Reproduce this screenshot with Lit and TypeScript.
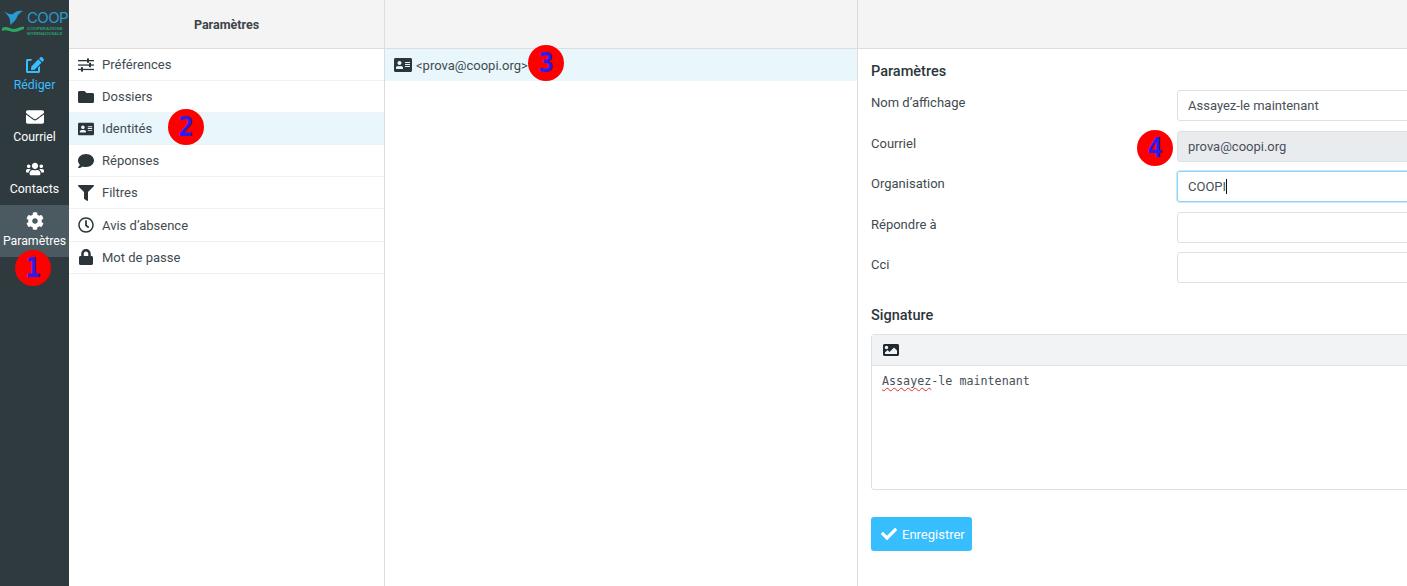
import { LitElement, css, html, svg } from "lit";
import { customElement } from "lit/decorators.js";

const icon = (vb: string, d: string) => html`<svg viewBox=${vb} fill="currentColor" aria-hidden="true"><path d=${d}></path></svg>`;

const ICONS = {
  edit: icon("0 0 576 512", "M402.6 83.2l90.2 90.2c3.8 3.8 3.8 10 0 13.8L274.4 405.6l-92.8 10.3c-12.4 1.4-22.9-9.1-21.5-21.5l10.3-92.8L388.8 83.2c3.8-3.8 10-3.8 13.8 0zm162-22.9l-48.8-48.8c-15.2-15.2-39.9-15.2-55.2 0l-35.4 35.4c-3.8 3.8-3.8 10 0 13.8l90.2 90.2c3.8 3.8 10 3.8 13.8 0l35.4-35.4c15.2-15.3 15.2-40 0-55.2zM384 346.2V448H64V128h73.1c3.2 0 6.2-1.3 8.5-3.5l40-40c7.6-7.6 2.2-20.5-8.5-20.5H48C21.5 64 0 85.5 0 112v352c0 26.5 21.5 48 48 48h352c26.5 0 48-21.5 48-48V306.2c0-10.7-12.9-16-20.5-8.5l-40 40c-2.2 2.3-3.5 5.3-3.5 8.5z"),
  envelope: icon("0 0 512 512", "M502.3 190.8c3.9-3.1 9.7-.2 9.7 4.7V400c0 26.5-21.5 48-48 48H48c-26.5 0-48-21.5-48-48V195.6c0-5 5.7-7.8 9.7-4.7 22.4 17.4 52.1 39.5 154.1 113.6 21.1 15.4 56.7 47.8 92.2 47.6 35.7.3 72-32.8 92.3-47.6 102-74.1 131.6-96.3 154-113.7zM256 320c23.2.4 56.6-29.2 73.4-41.4 132.7-96.3 142.8-104.7 173.4-128.7 5.8-4.5 9.2-11.5 9.2-18.9v-19c0-26.5-21.5-48-48-48H48C21.5 64 0 85.5 0 112v19c0 7.4 3.4 14.3 9.2 18.9 30.6 23.9 40.7 32.4 173.4 128.7 16.8 12.2 50.2 41.8 73.4 41.4z"),
  users: icon("0 0 640 512", "M96 224c35.3 0 64-28.7 64-64s-28.7-64-64-64-64 28.7-64 64 28.7 64 64 64zm448 0c35.3 0 64-28.7 64-64s-28.7-64-64-64-64 28.7-64 64 28.7 64 64 64zm32 32h-64c-17.6 0-33.5 7.1-45.1 18.6 40.3 22.1 68.9 62 75.1 109.4h66c17.7 0 32-14.3 32-32v-32c0-35.3-28.7-64-64-64zm-256 0c61.9 0 112-50.1 112-112S381.9 32 320 32 208 82.1 208 144s50.1 112 112 112zm76.8 32h-8.3c-20.8 10-43.9 16-68.5 16s-47.6-6-68.5-16h-8.3C179.6 288 128 339.6 128 403.2V432c0 26.5 21.5 48 48 48h288c26.5 0 48-21.5 48-48v-28.8c0-63.6-51.6-115.2-115.2-115.2zm-223.7-13.4C161.5 263.1 145.6 256 128 256H64c-35.3 0-64 28.7-64 64v32c0 17.7 14.3 32 32 32h65.9c6.3-47.4 34.9-87.3 75.2-109.4z"),
  cog: icon("0 0 512 512", "M487.4 315.7l-42.6-24.6c4.3-23.2 4.3-47 0-70.2l42.6-24.6c4.9-2.8 7.1-8.6 5.5-14-11.1-35.6-30-67.8-54.7-94.6-3.8-4.1-10-5.1-14.8-2.3L380.8 110c-17.9-15.4-38.5-27.3-60.8-35.1V25.8c0-5.6-3.9-10.5-9.4-11.7-36.7-8.2-74.3-7.8-109.2 0-5.5 1.2-9.4 6.1-9.4 11.7V75c-22.2 7.9-42.8 19.8-60.8 35.1L88.7 85.5c-4.9-2.8-11-1.9-14.8 2.3-24.7 26.7-43.6 58.9-54.7 94.6-1.7 5.4.6 11.2 5.5 14L67.3 221c-4.3 23.2-4.3 47 0 70.2l-42.6 24.6c-4.9 2.8-7.1 8.6-5.5 14 11.1 35.6 30 67.8 54.7 94.6 3.8 4.1 10 5.1 14.8 2.3l42.6-24.6c17.9 15.4 38.5 27.3 60.8 35.1v49.2c0 5.6 3.9 10.5 9.4 11.7 36.7 8.2 74.3 7.8 109.2 0 5.5-1.2 9.4-6.1 9.4-11.7v-49.2c22.2-7.9 42.8-19.8 60.8-35.1l42.6 24.6c4.9 2.8 11 1.9 14.8-2.3 24.7-26.7 43.6-58.9 54.7-94.6 1.5-5.5-.7-11.3-5.6-14.1zM256 336c-44.1 0-80-35.9-80-80s35.9-80 80-80 80 35.9 80 80-35.9 80-80 80z"),
  sliders: html`<svg viewBox="0 0 16 14" fill="currentColor" aria-hidden="true"><rect x="0" y="2" width="16" height="1.3"></rect><rect x="9" y="0.4" width="2" height="4.4"></rect><rect x="0" y="6.4" width="16" height="1.3"></rect><rect x="11" y="4.8" width="2" height="4.4"></rect><rect x="0" y="10.8" width="16" height="1.3"></rect><rect x="3" y="9.2" width="2" height="4.4"></rect></svg>`,
  folder: icon("0 0 512 512", "M464 128H272l-64-64H48C21.49 64 0 85.49 0 112v288c0 26.51 21.49 48 48 48h416c26.51 0 48-21.49 48-48V176c0-26.51-21.49-48-48-48z"),
  card: icon("0 0 576 512", "M528 32H48C21.5 32 0 53.5 0 80v352c0 26.5 21.5 48 48 48h480c26.5 0 48-21.5 48-48V80c0-26.5-21.5-48-48-48zm-352 96c35.3 0 64 28.7 64 64s-28.7 64-64 64-64-28.7-64-64 28.7-64 64-64zm112 236.8c0 10.6-10 19.2-22.4 19.2H86.4C74 384 64 375.4 64 364.8v-19.2c0-31.8 30.1-57.6 67.2-57.6h5c12.3 5.1 25.7 8 39.8 8s27.6-2.9 39.8-8h5c37.1 0 67.2 25.8 67.2 57.6v19.2zM512 312c0 4.4-3.6 8-8 8H360c-4.4 0-8-3.6-8-8v-16c0-4.4 3.6-8 8-8h144c4.4 0 8 3.6 8 8v16zm0-64c0 4.4-3.6 8-8 8H360c-4.4 0-8-3.6-8-8v-16c0-4.4 3.6-8 8-8h144c4.4 0 8 3.6 8 8v16zm0-64c0 4.4-3.6 8-8 8H360c-4.4 0-8-3.6-8-8v-16c0-4.4 3.6-8 8-8h144c4.4 0 8 3.6 8 8v16z"),
  comment: icon("0 0 512 512", "M256 32C114.6 32 0 125.1 0 240c0 49.6 21.4 95 57 130.7C44.5 421.1 2.7 466 2.2 466.5c-2.2 2.3-2.8 5.7-1.5 8.7S4.8 480 8 480c66.3 0 116-31.8 140.6-51.4 32.7 12.3 69 19.4 107.4 19.4 141.4 0 256-93.1 256-208S397.4 32 256 32z"),
  filter: icon("0 0 512 512", "M487.976 0H24.028C2.71 0-8.047 25.866 7.058 40.971L192 225.941V432c0 7.831 3.821 15.17 10.237 19.662l80 55.98C298.02 518.69 320 507.493 320 487.98V225.941l184.947-184.97C520.021 25.896 509.338 0 487.976 0z"),
  clock: icon("0 0 512 512", "M256 8C119 8 8 119 8 256s111 248 248 248 248-111 248-248S393 8 256 8zm0 448c-110.5 0-200-89.5-200-200S145.5 56 256 56s200 89.5 200 200-89.5 200-200 200zm61.8-104.4l-84.9-61.7c-3.1-2.3-4.9-5.9-4.9-9.7V116c0-6.6 5.4-12 12-12h32c6.6 0 12 5.4 12 12v141.7l66.8 48.6c5.4 3.9 6.5 11.4 2.6 16.8L334.6 349c-3.9 5.3-11.4 6.5-16.8 2.6z"),
  lock: icon("0 0 448 512", "M400 224h-24v-72C376 68.2 307.8 0 224 0S72 68.2 72 152v72H48c-26.5 0-48 21.5-48 48v192c0 26.5 21.5 48 48 48h352c26.5 0 48-21.5 48-48V272c0-26.5-21.5-48-48-48zm-104 0H152v-72c0-39.7 32.3-72 72-72s72 32.3 72 72v72z"),
  image: icon("0 0 512 512", "M464 448H48c-26.51 0-48-21.49-48-48V112c0-26.51 21.49-48 48-48h416c26.51 0 48 21.49 48 48v288c0 26.51-21.49 48-48 48zM112 120c-30.928 0-56 25.072-56 56s25.072 56 56 56 56-25.072 56-56-25.072-56-56-56zM64 384h384V272l-87.515-87.515c-4.686-4.686-12.284-4.686-16.971 0L208 320l-55.515-55.515c-4.686-4.686-12.284-4.686-16.971 0L64 336v48z"),
  check: icon("0 0 512 512", "M173.898 439.404l-166.4-166.4c-9.997-9.997-9.997-26.206 0-36.204l36.203-36.204c9.997-9.998 26.207-9.998 36.204 0L192 312.69 432.095 72.596c9.997-9.997 26.207-9.997 36.204 0l36.203 36.204c9.997 9.997 9.997 26.206 0 36.204l-294.4 294.401c-9.998 9.997-26.207 9.997-36.204-.001z"),
};

const logo = svg`
  <path d="M3 11 C7 13 10 15 13 14 C15 12 18 10 23 11 C20 12 20 14 18 15 C16 20 13 23 10 25 C11 21 10 16 3 11Z" fill="#2a9bd0"></path>
  <path d="M2 28 C7 25 10 29 14 29 C18 29 21 26 24 27 L24 29 C20 30 18 32 14 32 C10 32 6 29 2 31Z" fill="#2aa760"></path>
  <text x="27" y="23" font-family="Inter, sans-serif" font-size="15" letter-spacing="-0.6" fill="#2a9bd0">COOPI</text>
  <text x="27" y="30" font-family="Liberation Sans, sans-serif" font-size="4.4" font-weight="700" fill="#2a9d70">COOPERAZIONE</text>
  <text x="27" y="35" font-family="Liberation Sans, sans-serif" font-size="4" font-weight="700" fill="#2a9d70">INTERNAZIONALE</text>
`;

const NAV = [
  { label: "Rédiger", icon: ICONS.edit, cls: "compose" },
  { label: "Courriel", icon: ICONS.envelope, cls: "" },
  { label: "Contacts", icon: ICONS.users, cls: "" },
  { label: "Paramètres", icon: ICONS.cog, cls: "selected" },
];

const SECTIONS = [
  { label: "Préférences", icon: ICONS.sliders },
  { label: "Dossiers", icon: ICONS.folder },
  { label: "Identités", icon: ICONS.card, selected: true },
  { label: "Réponses", icon: ICONS.comment },
  { label: "Filtres", icon: ICONS.filter },
  { label: "Avis d’absence", icon: ICONS.clock },
  { label: "Mot de passe", icon: ICONS.lock },
];

const MARKS = [
  { n: "1", x: 33, y: 268 },
  { n: "2", x: 186, y: 127 },
  { n: "3", x: 546, y: 63 },
  { n: "4", x: 1155, y: 148 },
];

@customElement("app-root")
export class AppRoot extends LitElement {
  static styles = css`
    :host {
      display: flex;
      position: relative;
      width: 1407px;
      height: 586px;
      overflow: hidden;
      background: #fff;
      color: #2c363a;
      font-family: Roboto, "Liberation Sans", sans-serif;
      font-size: 13px;
    }
    svg { display: block; }
    .menu {
      flex: none;
      width: 69px;
      background: #2f3a3f;
      color: #fff;
    }
    .logo { display: block; height: 49px; width: 69px; }
    .nav-item {
      height: 52px;
      display: flex;
      flex-direction: column;
      align-items: center;
      padding-top: 7px;
      box-sizing: border-box;
      font-size: 12.3px;
    }
    .nav-item svg { height: 18px; width: 18px; margin-bottom: 4px; }
    .nav-item .wide { }
    .nav-item.compose { color: #37beff; }
    .nav-item.selected { background: #4a5a60; }
    .col { flex: none; box-sizing: border-box; border-right: 1px solid #ddd; }
    .col.sections { width: 316px; }
    .col.list { width: 473px; }
    .col.content { flex: 1; border-right: 0; min-width: 0; }
    .head {
      height: 49px;
      box-sizing: border-box;
      background: #f4f4f4;
      border-bottom: 1px solid #ddd;
      display: flex;
      align-items: center;
      justify-content: center;
      font-weight: 700;
      font-size: 12.5px;
      color: #3a4449;
    }
    .row {
      height: 32.1px;
      box-sizing: border-box;
      display: flex;
      align-items: center;
      padding-left: 9px;
      border-bottom: 1px solid #f1f1f1;
      color: #3f4b50;
    }
    .row.selected { background: #e9f6fc; }
    .row .ic { width: 16px; height: 16px; margin-right: 8px; color: #2c363a; display: flex; align-items: center; justify-content: center; }
    .row .ic svg { width: 16px; height: 16px; }
    .ident { height: 32px; display: flex; align-items: center; padding-left: 9px; background: #e9f6fc; gap: 3px; color: #3f4b50; }
    .ident svg { width: 18px; height: 16px; margin-right: 1px; color: #2c363a; }
    .form { padding: 14px 0 0 13px; width: 900px; }
    .title { font-size: 14.5px; font-weight: 500; color: #2c363a; line-height: 18px; margin-bottom: 9px; }
    .fields {
      display: grid;
      grid-template-columns: 306px 1fr;
      grid-auto-rows: 31px;
      row-gap: 9.5px;
      color: #3f4b50;
    }
    .fields label { padding-top: 4px; line-height: 18px; }
    .field {
      box-sizing: border-box;
      border: 1px solid #dde1e4;
      border-radius: 3px;
      padding: 0 10px;
      line-height: 29px;
      color: #495057;
    }
    .field.readonly { background: #e9ecef; }
    .field.focus { border-color: #8fd3f8; box-shadow: 0 0 0 1px #c7e9fb; }
    .caret { display: inline-block; width: 1px; height: 15px; background: #111; vertical-align: -3px; }
    .sig-title { margin: 24px 0 9px; }
    .editor { border: 1px solid #dde1e4; border-radius: 3px; height: 156px; box-sizing: border-box; }
    .toolbar { height: 30px; background: #f1f3f5; border-bottom: 1px solid #dde1e4; display: flex; align-items: center; padding-left: 11px; color: #1f2a30; }
    .toolbar svg { width: 16px; height: 16px; }
    .text { font-family: "DejaVu Sans Mono", monospace; font-size: 11.7px; padding: 8px 10px; line-height: 14px; color: #495057; }
    .typo { text-decoration: underline wavy #e03030 1px; text-underline-offset: 2px; }
    .save {
      display: flex;
      align-items: center;
      gap: 5px;
      margin-top: 27px;
      width: 101px;
      height: 34px;
      box-sizing: border-box;
      padding-left: 10px;
      border: 0;
      border-radius: 3px;
      background: #37beff;
      color: #fff;
      font: inherit;
    }
    .save svg { width: 16px; height: 16px; }
    .mark {
      position: absolute;
      width: 36px;
      height: 36px;
      margin: -18px 0 0 -18px;
      border-radius: 50%;
      background: #ff0000;
      color: #2a1cf0;
      font-family: "DejaVu Sans Mono", monospace;
      font-weight: 700;
      font-size: 26px;
      display: flex;
      align-items: center;
      justify-content: center;
    }
  `;

  render() {
    return html`
      <nav class="menu">
        <svg class="logo" viewBox="0 0 69 49">${logo}</svg>
        ${NAV.map((n) => html`<div class="nav-item ${n.cls}">${n.icon}<span>${n.label}</span></div>`)}
      </nav>
      <section class="col sections">
        <div class="head">Paramètres</div>
        ${SECTIONS.map((s) => html`<div class="row ${s.selected ? "selected" : ""}"><span class="ic">${s.icon}</span>${s.label}</div>`)}
      </section>
      <section class="col list">
        <div class="head"></div>
        <div class="ident">${ICONS.card}&lt;prova@coopi.org&gt;</div>
      </section>
      <section class="col content">
        <div class="head"></div>
        <div class="form">
          <div class="title">Paramètres</div>
          <div class="fields">
            <label>Nom d’affichage</label><div class="field">Assayez-le maintenant</div>
            <label>Courriel</label><div class="field readonly">prova@coopi.org</div>
            <label>Organisation</label><div class="field focus">COOPI<span class="caret"></span></div>
            <label>Répondre à</label><div class="field"></div>
            <label>Cci</label><div class="field"></div>
          </div>
          <div class="title sig-title">Signature</div>
          <div class="editor">
            <div class="toolbar">${ICONS.image}</div>
            <div class="text"><span class="typo">Assayez</span>-le maintenant</div>
          </div>
          <button class="save">${ICONS.check}Enregistrer</button>
        </div>
      </section>
      ${MARKS.map((m) => html`<div class="mark" style="left:${m.x}px;top:${m.y}px">${m.n}</div>`)}
    `;
  }
}
